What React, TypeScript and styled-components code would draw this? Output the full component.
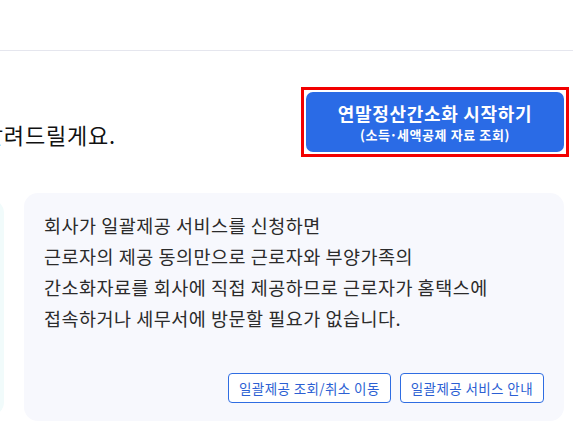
import { memo } from 'react'
import styled, { createGlobalStyle } from 'styled-components'

const GlobalStyle = createGlobalStyle`
  html, body {
    margin: 0;
    padding: 0;
    background: #fff;
  }
  body {
    font-family: "Noto Sans CJK KR", "Noto Sans", sans-serif;
    color: #222;
  }
  * { box-sizing: border-box; }
`

const Page = styled.div`
  width: 573px;
  height: 425px;
  overflow: hidden;
  background: #fff;
`

const TopBar = styled.header`
  height: 51px;
  border-bottom: 1px solid #e5e6ee;
  background: #fff;
`

const TitleRow = styled.section`
  display: flex;
  align-items: flex-end;
  justify-content: space-between;
  padding: 36px 4px 0 0;
`

/* the heading is wider than the viewport and is cut at the left edge */
const TitleClip = styled.div`
  width: 116px;
  display: flex;
  justify-content: flex-end;
  margin-bottom: 8px;
`

const Title = styled.h2`
  margin: 0;
  flex: 0 0 auto;
  white-space: nowrap;
  font-size: 22px;
  line-height: 30px;
  letter-spacing: 0.8px;
  font-weight: 400;
  color: #111;
`

/* red highlight box drawn around the main button */
const Highlight = styled.div`
  border: 3px solid #f20000;
  padding: 2px;
  background: #fff;
`

const StartButton = styled.button`
  width: 258px;
  height: 60px;
  display: flex;
  flex-direction: column;
  align-items: center;
  justify-content: center;
  gap: 1px;
  border: 0;
  border-radius: 7px;
  background: #2a6be6;
  color: #fff;
  font-family: inherit;
  cursor: pointer;
  .main{
    font-size: 18px;
    line-height: 24px;
    letter-spacing: 0.7px;
    font-weight: 700;
  }
  .sub{
    font-size: 13px;
    line-height: 18px;
    letter-spacing: 0.6px;
    font-weight: 700;
  }
  .dot{
    margin: 0 -1px;
  }
`

const Cards = styled.section`
  display: flex;
  align-items: center;
  gap: 20px;
  margin: 36px 9px 0 -276px;
`

interface CardProps {
  $tone: 'mint' | 'gray'
  $height: number
}

const Card = styled.div<CardProps>`
  flex: ${p => (p.$tone === 'mint' ? '0 0 280px' : '1')};
  height: ${p => p.$height}px;
  border-radius: 14px;
  background: ${p => (p.$tone === 'mint' ? '#f1fbfb' : '#f7f8fd')};
  display: flex;
  flex-direction: column;
  justify-content: space-between;
  padding: 17px 20px 18px;
`

const CardText = styled.p`
  margin: 0;
  font-size: 18.5px;
  line-height: 31px;
  letter-spacing: 0.5px;
  color: #2b2b2b;
`

const LinkRow = styled.div`
  display: flex;
  justify-content: flex-end;
  gap: 9px;
`

const LinkButton = styled.button`
  height: 30px;
  padding: 0 10px;
  border: 1px solid #2f6de2;
  border-radius: 4px;
  background: #fff;
  color: #2c5fd3;
  font-family: inherit;
  font-size: 13.5px;
  letter-spacing: 0.4px;
  cursor: pointer;
`

const lines = [
  '회사가 일괄제공 서비스를 신청하면',
  '근로자의 제공 동의만으로 근로자와 부양가족의',
  '간소화자료를 회사에 직접 제공하므로 근로자가 홈택스에',
  '접속하거나 세무서에 방문할 필요가 없습니다.',
]

const links = ['일괄제공 조회/취소 이동', '일괄제공 서비스 안내']

const App = () => {
  return (
    <Page>
      <GlobalStyle/>
      <TopBar/>
      <TitleRow>
        <TitleClip>
          <Title>간소화 자료 제공 방법을 알려드릴게요.</Title>
        </TitleClip>
        <Highlight>
          <StartButton>
            <span className="main">연말정산간소화 시작하기</span>
            <span className="sub">(소득<span className="dot">·</span>세액공제 자료 조회)</span>
          </StartButton>
        </Highlight>
      </TitleRow>
      <Cards>
        <Card $tone="mint" $height={217}/>
        <Card $tone="gray" $height={228}>
          <CardText>
            {lines.map(line => (
              <span key={line}>{line}<br/></span>
            ))}
          </CardText>
          <LinkRow>
            {links.map(item => <LinkButton key={item}>{item}</LinkButton>)}
          </LinkRow>
        </Card>
      </Cards>
    </Page>
  )
}

export default memo(App)
